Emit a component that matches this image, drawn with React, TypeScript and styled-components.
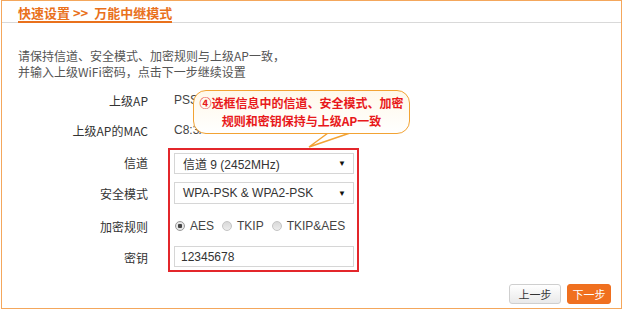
import React from "react";
import styled, { createGlobalStyle } from "styled-components";

const GlobalStyle = createGlobalStyle`
  html, body {
    margin: 0;
    padding: 0;
    background: #ffffff;
  }
  body {
    font-family: "Liberation Sans", "Noto Sans CJK SC", sans-serif;
    font-size: 12px;
    color: #333;
  }
`;

const Frame = styled.div`
  position: relative;
  box-sizing: border-box;
  width: 621px;
  height: 309px;
  margin-left: 1px;
  border: 1px solid #f4a75c;
  display: flex;
  flex-direction: column;
`;

const Header = styled.div`
  display: flex;
  align-items: flex-end;
  padding: 3px 0 0 16px;
  border-bottom: 1px solid #d9d9d9;
`;

const Title = styled.div`
  font-family: "Noto Sans CJK SC", sans-serif;
  font-size: 13px;
  font-weight: bold;
  line-height: 17px;
  color: #e9711c;
  border-bottom: 2px solid #e9711c;
  margin-bottom: -1px;
  white-space: pre;
`;

const Description = styled.div`
  padding: 25px 0 0 16px;
  font-family: "Noto Sans CJK SC", sans-serif;
  font-size: 12px;
  line-height: 16px;
  color: #555;
`;

const Form = styled.div`
  display: grid;
  grid-template-columns: 146px 191px;
  grid-template-rows: 30px 30px 3px 29px 32px 34px 29px;
  column-gap: 20px;
  margin-top: 5px;
`;

const Label = styled.div<{ row: number }>`
  grid-column: 1;
  grid-row: ${({ row }) => row};
  display: flex;
  align-items: center;
  justify-content: flex-end;
  font-family: "Noto Sans CJK SC", sans-serif;
  font-size: 12px;
  color: #333;
`;

const Value = styled.div<{ row: number }>`
  grid-column: 2;
  grid-row: ${({ row }) => row};
  display: flex;
  align-items: center;
  padding-left: 6px;
  white-space: nowrap;
  font-size: 12px;
  color: #444;
`;

const HighlightBox = styled.div`
  grid-column: 2;
  grid-row: 4 / span 4;
  border: 2px solid #e3262b;
  display: grid;
  grid-template-rows: 27px 32px 34px 27px;
  padding: 0 4px;
`;

const ControlRow = styled.div`
  display: flex;
  align-items: center;
`;

const Select = styled.div<{ h: number }>`
  box-sizing: border-box;
  width: 180px;
  height: ${({ h }) => h}px;
  border: 1px solid #d6d6d6;
  display: flex;
  align-items: center;
  justify-content: space-between;
  padding: 0 7px 0 8px;
  font-size: 12px;
  color: #333;
`;

const Arrow = styled.span`
  font-size: 8px;
  color: #111;
`;

const Input = styled.div`
  box-sizing: border-box;
  width: 180px;
  height: 21px;
  border: 1px solid #d6d6d6;
  display: flex;
  align-items: center;
  padding-left: 6px;
  font-size: 12px;
  color: #333;
`;

const RadioGroup = styled.div`
  display: flex;
  align-items: center;
  gap: 8px;
  padding-left: 1px;
`;

const RadioItem = styled.label`
  display: flex;
  align-items: center;
  gap: 5px;
  font-size: 12px;
  color: #444;
`;

const RadioDot = styled.span<{ checked?: boolean }>`
  box-sizing: border-box;
  width: 10px;
  height: 10px;
  border-radius: 50%;
  border: 1px solid ${({ checked }) => (checked ? "#9a9a9a" : "#c4c4c4")};
  background: ${({ checked }) =>
    checked ? "radial-gradient(circle, #444 0 2px, #e6e6e6 2.5px)" : "linear-gradient(#d8d8d8, #ececec)"};
`;

const Footer = styled.div`
  display: flex;
  justify-content: flex-end;
  gap: 6px;
  margin-top: 12px;
  padding-right: 10px;
`;

const Button = styled.button<{ primary?: boolean }>`
  box-sizing: border-box;
  height: 20px;
  width: ${({ primary }) => (primary ? 44 : 52)}px;
  padding: 0;
  border-radius: 3px;
  border: 1px solid ${({ primary }) => (primary ? "#ef6f1f" : "#cfcfcf")};
  background: ${({ primary }) => (primary ? "#f0701f" : "linear-gradient(#ffffff, #e9e9e9)")};
  color: ${({ primary }) => (primary ? "#ffffff" : "#333")};
  font-family: "Noto Sans CJK SC", sans-serif;
  font-size: 11px;
  line-height: 18px;
`;

/* callout annotation drawn over the form */
const Bubble = styled.div`
  position: absolute;
  left: 191px;
  top: 89px;
  box-sizing: border-box;
  width: 217px;
  height: 44px;
  border: 1.5px solid #f2a334;
  border-radius: 13px;
  background: linear-gradient(#fff8ea, #ffffff);
  display: flex;
  flex-direction: column;
  align-items: center;
  justify-content: center;
  font-family: "Noto Sans CJK SC", sans-serif;
  font-weight: bold;
  font-size: 12px;
  line-height: 18px;
  color: #e8191b;
  white-space: nowrap;
`;

const Tail = styled.svg`
  position: absolute;
  left: 304px;
  top: 130px;
`;

export default function App() {
  return (
    <>
      <GlobalStyle />
      <Frame>
        <Header>
          <Title>{"快速设置 >>  万能中继模式"}</Title>
        </Header>
        <Description>
          请保持信道、安全模式、加密规则与上级AP一致，
          <br />
          并输入上级WiFi密码，点击下一步继续设置
        </Description>
        <Form>
          <Label row={1}>上级AP</Label>
          <Value row={1}>PSST_Tenda_Office</Value>
          <Label row={2}>上级AP的MAC</Label>
          <Value row={2}>C8:3A:35:1E:62:90</Value>
          <Label row={4}>信道</Label>
          <Label row={5}>安全模式</Label>
          <Label row={6}>加密规则</Label>
          <Label row={7}>密钥</Label>
          <HighlightBox>
            <ControlRow>
              <Select h={21}>
                <span>信道 9 (2452MHz)</span>
                <Arrow>▼</Arrow>
              </Select>
            </ControlRow>
            <ControlRow>
              <Select h={22}>
                <span>WPA-PSK &amp; WPA2-PSK</span>
                <Arrow>▼</Arrow>
              </Select>
            </ControlRow>
            <ControlRow>
              <RadioGroup>
                <RadioItem>
                  <RadioDot checked />
                  AES
                </RadioItem>
                <RadioItem>
                  <RadioDot />
                  TKIP
                </RadioItem>
                <RadioItem>
                  <RadioDot />
                  TKIP&amp;AES
                </RadioItem>
              </RadioGroup>
            </ControlRow>
            <ControlRow>
              <Input>12345678</Input>
            </ControlRow>
          </HighlightBox>
        </Form>
        <Footer>
          <Button>上一步</Button>
          <Button primary>下一步</Button>
        </Footer>
        <Tail width="50" height="20" viewBox="0 0 50 20">
          <path d="M22 2 L3 16 L44 2" fill="#ffffff" stroke="#f2a334" strokeWidth="1.5" strokeLinejoin="miter" />
        </Tail>
        <Bubble>
          <span>④选框信息中的信道、安全模式、加密</span>
          <span>规则和密钥保持与上级AP一致</span>
        </Bubble>
      </Frame>
    </>
  );
}
